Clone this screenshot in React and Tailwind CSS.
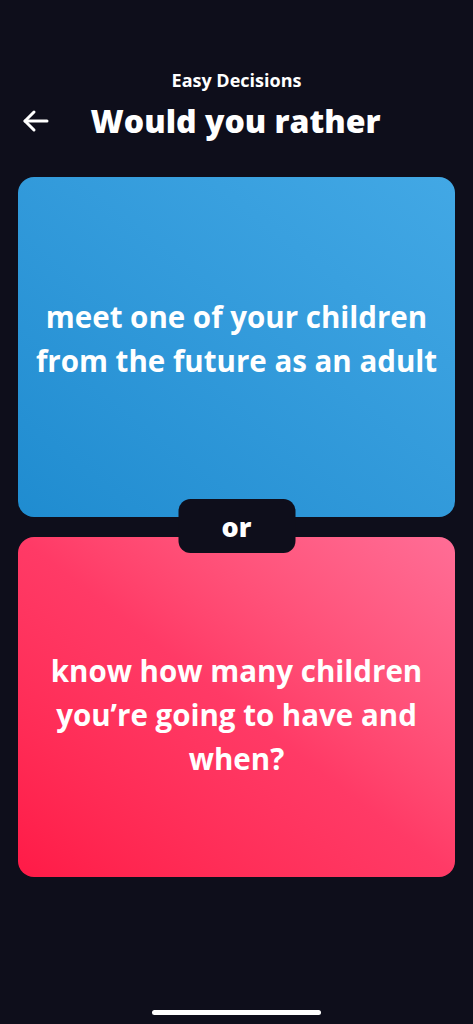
import React from 'react';

const FONT = { fontFamily: '"Open Sans", "Lato", sans-serif' };

// Two choices shown stacked, with the "or" chip sitting on the seam between them.
const CHOICES = [
  {
    id: 'a',
    lines: ['meet one of your children', 'from the future as an adult'],
    className: 'bg-gradient-to-tr from-[#1f8cd0] to-[#42a8e5] pb-[16px]',
  },
  {
    id: 'b',
    lines: ['know how many children', 'you’re going to have and', 'when?'],
    className: 'bg-gradient-to-tr from-[#ff1a47] via-[#ff3a66] to-[#ff6d96] pt-[16px]',
  },
];

const BackArrow = () => (
  <svg width="28" height="24" viewBox="0 0 28 24" fill="none" stroke="white" strokeWidth="3" strokeLinecap="round" strokeLinejoin="round">
    <path d="M25 12H3" />
    <path d="M12 3L3 12l9 9" />
  </svg>
);

const ChoiceCard = ({ choice }) => (
  <button
    type="button"
    className={`flex h-[340px] w-full items-center justify-center rounded-[16px] px-2 ${choice.className}`}
  >
    <span className="text-center text-[29.5px] font-bold leading-[44px] text-white" style={FONT}>
      {choice.lines.map((l, i) => (
        <span key={i} className="block whitespace-nowrap">{l}</span>
      ))}
    </span>
  </button>
);

export default function App() {
  return (
    <div className="flex h-[1024px] w-[473px] flex-col bg-[#0e0e1b] text-white" style={FONT}>
      <header className="pt-[68px]">
        <p className="text-center text-[18px] font-bold leading-6">Easy Decisions</p>
        <div className="mt-[9px] grid grid-cols-[56px_1fr_56px] items-center px-[22px]">
          <button type="button" className="flex items-center" aria-label="Back">
            <BackArrow />
          </button>
          <h1 className="-ml-[2px] text-center text-[32px] font-extrabold leading-[40px]">Would you rather</h1>
          <span />
        </div>
      </header>

      <main className="relative mt-[36px] flex flex-col gap-[20px] px-[18px]">
        {CHOICES.map((c) => (
          <ChoiceCard key={c.id} choice={c} />
        ))}
        <div className="absolute left-1/2 top-[322px] flex h-[54px] w-[117px] -translate-x-1/2 items-center justify-center rounded-[12px] bg-[#0e0e1b]">
          <span className="text-[27px] font-extrabold leading-none">or</span>
        </div>
      </main>

      <div className="mt-auto flex justify-center pb-[9px]">
        <div className="h-[5px] w-[169px] rounded-full bg-white" />
      </div>
    </div>
  );
}
